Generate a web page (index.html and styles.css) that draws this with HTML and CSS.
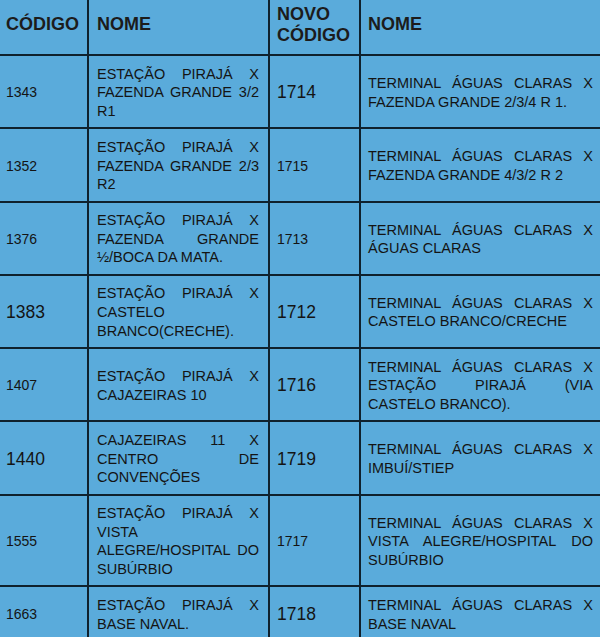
FILE: index.html
```html
<!DOCTYPE html>
<html lang="pt-BR">
<head>
<meta charset="utf-8">
<title>Linhas</title>
<link rel="stylesheet" href="styles.css">
</head>
<body>
<div class="grid">
  <div class="cell h c1">CÓDIGO</div>
  <div class="cell h c2">NOME</div>
  <div class="cell h c3">NOVO CÓDIGO</div>
  <div class="cell h c4">NOME</div>

  <div class="cell c1 num">1343</div>
  <div class="cell c2 name"><div class="txt">ESTAÇÃO PIRAJÁ X FAZENDA GRANDE 3/2 R1</div></div>
  <div class="cell c3 num big">1714</div>
  <div class="cell c4 name"><div class="txt">TERMINAL ÁGUAS CLARAS X FAZENDA GRANDE 2/3/4 R 1.</div></div>

  <div class="cell c1 num">1352</div>
  <div class="cell c2 name"><div class="txt">ESTAÇÃO PIRAJÁ X FAZENDA GRANDE 2/3 R2</div></div>
  <div class="cell c3 num">1715</div>
  <div class="cell c4 name"><div class="txt">TERMINAL ÁGUAS CLARAS X FAZENDA GRANDE 4/3/2 R 2</div></div>

  <div class="cell c1 num">1376</div>
  <div class="cell c2 name"><div class="txt">ESTAÇÃO PIRAJÁ X FAZENDA GRANDE ½/BOCA DA MATA.</div></div>
  <div class="cell c3 num">1713</div>
  <div class="cell c4 name"><div class="txt">TERMINAL ÁGUAS CLARAS X ÁGUAS CLARAS</div></div>

  <div class="cell c1 num big">1383</div>
  <div class="cell c2 name"><div class="txt">ESTAÇÃO PIRAJÁ X CASTELO BRANCO(CRECHE).</div></div>
  <div class="cell c3 num big">1712</div>
  <div class="cell c4 name"><div class="txt">TERMINAL ÁGUAS CLARAS X CASTELO BRANCO/CRECHE</div></div>

  <div class="cell c1 num">1407</div>
  <div class="cell c2 name"><div class="txt">ESTAÇÃO PIRAJÁ X CAJAZEIRAS 10</div></div>
  <div class="cell c3 num big">1716</div>
  <div class="cell c4 name"><div class="txt">TERMINAL ÁGUAS CLARAS X ESTAÇÃO PIRAJÁ (VIA CASTELO BRANCO).</div></div>

  <div class="cell c1 num big">1440</div>
  <div class="cell c2 name"><div class="txt">CAJAZEIRAS 11 X CENTRO DE CONVENÇÕES</div></div>
  <div class="cell c3 num big">1719</div>
  <div class="cell c4 name"><div class="txt">TERMINAL ÁGUAS CLARAS X IMBUÍ/STIEP</div></div>

  <div class="cell c1 num">1555</div>
  <div class="cell c2 name"><div class="txt">ESTAÇÃO PIRAJÁ X VISTA ALEGRE/HOSPITAL DO SUBÚRBIO</div></div>
  <div class="cell c3 num">1717</div>
  <div class="cell c4 name"><div class="txt">TERMINAL ÁGUAS CLARAS X VISTA ALEGRE/HOSPITAL DO SUBÚRBIO</div></div>

  <div class="cell c1 num">1663</div>
  <div class="cell c2 name"><div class="txt">ESTAÇÃO PIRAJÁ X BASE NAVAL.</div></div>
  <div class="cell c3 num big">1718</div>
  <div class="cell c4 name"><div class="txt">TERMINAL ÁGUAS CLARAS X BASE NAVAL</div></div>
</div>
</body>
</html>
```

FILE: styles.css
```css
html, body {
  margin: 0;
  padding: 0;
  background: #5aabdb;
  overflow: hidden;
}

body {
  width: 600px;
  height: 637px;
  font-family: "Liberation Sans", Arial, sans-serif;
  color: #141414;
}

.grid {
  display: grid;
  grid-template-columns: 89px 181px 91px 239px;
  width: 600px;
  background: #5aabdb;
}

.cell {
  box-sizing: border-box;
  display: flex;
  flex-direction: column;
  justify-content: center;
  border-right: 2px solid #0f212d;
  border-bottom: 2px solid #0f212d;
  padding: 8.7px 9px 6.8px 8px;
}

.c1 { padding-left: 6px; padding-right: 4px; }
.c2 { padding-left: 8px; padding-right: 9px; }
.c3 { padding-left: 7px; padding-right: 6px; }
.c4 { padding-left: 7px; padding-right: 7px; border-right: none; }

.h {
  height: 56px;
  padding-top: 0;
  padding-bottom: 4px;
  font-weight: bold;
  font-size: 18px;
  line-height: 21.3px;
  color: #1c1c1c;
}

.num {
  font-size: 14px;
  line-height: 18.6px;
}

.num.big {
  font-size: 17.5px;
}

.name {
  font-size: 14.5px;
  line-height: 18.6px;
}

.txt {
  text-align: justify;
}
```
